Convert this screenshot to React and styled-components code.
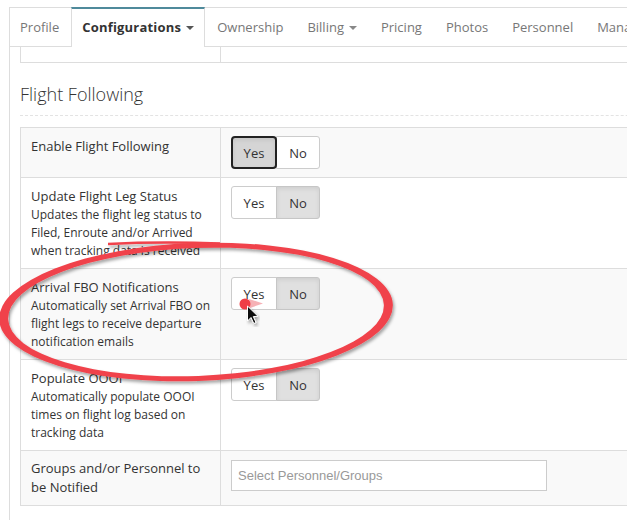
import React from "react";
import styled, { createGlobalStyle, css } from "styled-components";

const Global = createGlobalStyle`
  html, body { margin: 0; padding: 0; background: #fff; overflow: hidden; }
  body { font-family: "Open Sans", "Liberation Sans", sans-serif; color: #333; }
  * { box-sizing: border-box; }
`;

const Page = styled.div`
  position: relative;
  width: 900px;
  height: 520px;
  padding: 7px 0 0 9px;
`;

const Panel = styled.div`
  border: 1px solid #ddd;
  border-bottom: none;
  height: 600px;
`;

const TabBar = styled.div`
  display: flex;
  height: 39px;
  border-bottom: 1px solid #ddd;
`;

const Tab = styled.div`
  display: flex;
  align-items: center;
  padding: 0 11px;
  border: 1px solid transparent;
  border-top: none;
  border-bottom: none;
  height: 38px;
  font-size: 13px;
  color: #777;
  white-space: nowrap;
  &:first-child {
    padding-left: 9px;
  }
  ${(p) =>
    p.$active &&
    css`
      margin-top: -1px;
      height: 40px;
      padding: 0 10px 2px 10px;
      border-top: 2px solid #4f8a9b;
      border-left-color: #ddd;
      border-right-color: #ddd;
      background: #fff;
      color: #333;
      font-weight: 700;
      letter-spacing: 0.2px;
    `}
`;

const Caret = styled.span`
  display: inline-block;
  margin-left: 5px;
  margin-top: 1px;
  width: 0;
  height: 0;
  border-left: 4px solid transparent;
  border-right: 4px solid transparent;
  border-top: 4px solid ${(p) => (p.$dark ? "#555" : "#888")};
`;

const Content = styled.div`
  padding: 0 10px;
`;

const PrevTable = styled.div`
  display: grid;
  grid-template-columns: 200px 1fr;
  height: 16px;
  border-left: 1px solid #ddd;
  border-bottom: 1px solid #ddd;
`;

const PrevCell = styled.div`
  border-right: 1px solid #ddd;
`;

const Heading = styled.h3`
  margin: 21px 0 0;
  padding-bottom: 11px;
  font-size: 18px;
  font-weight: 300;
  line-height: 20px;
  color: #333;
  border-bottom: 1px dashed #e3e3e3;
`;

const Table = styled.div`
  margin-top: 11px;
  border: 1px solid #ddd;
  border-top: none;
`;

const Row = styled.div`
  display: grid;
  grid-template-columns: 200px 1fr;
  border-top: 1px solid #ddd;
  background: ${(p) => (p.$striped ? "#f9f9f9" : "#fff")};
`;

const LabelCell = styled.div`
  padding: 8px 10px;
  border-right: 1px solid #ddd;
`;

const ControlCell = styled.div`
  padding: 8px 10px;
`;

const Title = styled.div`
  font-size: 13px;
  line-height: ${(p) => (p.$tight ? "19px" : "20px")};
  color: #333;
`;

const Desc = styled.div`
  font-size: 12px;
  line-height: 18px;
  color: #333;
  white-space: nowrap;
`;

const BtnGroup = styled.div`
  display: inline-flex;
  height: 33px;
`;

const ToggleBtn = styled.div`
  display: flex;
  align-items: center;
  justify-content: center;
  width: ${(p) => p.$w}px;
  height: 33px;
  font-size: 13px;
  color: #333;
  background: #fff;
  border: 1px solid #ccc;
  &:first-child {
    border-radius: 3px 0 0 3px;
  }
  &:last-child {
    border-radius: 0 3px 3px 0;
    margin-left: -1px;
  }
  ${(p) =>
    p.$on &&
    css`
      background: #e0e0e0;
      border-color: #c6c6c6;
      box-shadow: inset 0 2px 4px rgba(0, 0, 0, 0.08);
    `}
  ${(p) =>
    p.$focus &&
    css`
      background: #d5d5d5;
      border: 2px solid #222;
      border-radius: 4px !important;
      position: relative;
      z-index: 1;
    `}
`;

const SelectInput = styled.input`
  display: block;
  width: 316px;
  height: 31px;
  margin-top: 1px;
  padding: 0 6px;
  border: 1px solid #ccc;
  background: #fff;
  font-family: "Liberation Sans", Arial, sans-serif;
  font-size: 13px;
  color: #555;
  outline: none;
  &::placeholder {
    color: #999;
  }
`;

const Overlay = styled.svg`
  position: absolute;
  left: 0;
  top: 0;
  width: 627px;
  height: 520px;
  pointer-events: none;
  overflow: visible;
`;

const Toggle = ({ value, focus }) => (
  <BtnGroup>
    <ToggleBtn $w={46} $on={value === "yes"} $focus={focus}>Yes</ToggleBtn>
    <ToggleBtn $w={44} $on={value === "no"}>No</ToggleBtn>
  </BtnGroup>
);

const tabs = [
  { label: "Profile" },
  { label: "Configurations", caret: true, active: true },
  { label: "Ownership" },
  { label: "Billing", caret: true },
  { label: "Pricing" },
  { label: "Photos" },
  { label: "Personnel" },
  { label: "Management" },
];

export default function App() {
  return (
    <>
      <Global />
      <Page>
        <Panel>
          <TabBar>
            {tabs.map((t) => (
              <Tab key={t.label} $active={t.active}>
                {t.label}
                {t.caret && <Caret $dark={t.active} />}
              </Tab>
            ))}
          </TabBar>
          <Content>
            <PrevTable>
              <PrevCell />
              <div />
            </PrevTable>
            <Heading>Flight Following</Heading>
            <Table>
              <Row $striped>
                <LabelCell>
                  <Title>Enable Flight Following</Title>
                </LabelCell>
                <ControlCell>
                  <Toggle value="yes" focus />
                </ControlCell>
              </Row>
              <Row>
                <LabelCell>
                  <Title>Update Flight Leg Status</Title>
                  <Desc>Updates the flight leg status to</Desc>
                  <Desc>Filed, Enroute and/or Arrived</Desc>
                  <Desc>when tracking data is received</Desc>
                </LabelCell>
                <ControlCell>
                  <Toggle value="no" />
                </ControlCell>
              </Row>
              <Row $striped>
                <LabelCell>
                  <Title>Arrival FBO Notifications</Title>
                  <Desc>Automatically set Arrival FBO on</Desc>
                  <Desc>flight legs to receive departure</Desc>
                  <Desc>notification emails</Desc>
                </LabelCell>
                <ControlCell>
                  <Toggle value="no" />
                </ControlCell>
              </Row>
              <Row>
                <LabelCell>
                  <Title>Populate OOOI</Title>
                  <Desc>Automatically populate OOOI</Desc>
                  <Desc>times on flight log based on</Desc>
                  <Desc>tracking data</Desc>
                </LabelCell>
                <ControlCell>
                  <Toggle value="no" />
                </ControlCell>
              </Row>
              <Row $striped>
                <LabelCell>
                  <Title $tight>
                    Groups and/or Personnel to
                    <br />
                    be Notified
                  </Title>
                </LabelCell>
                <ControlCell>
                  <SelectInput placeholder="Select Personnel/Groups" />
                </ControlCell>
              </Row>
            </Table>
          </Content>
        </Panel>
        <Overlay viewBox="0 0 627 520">
          <defs>
            <filter id="sh" x="-10%" y="-20%" width="120%" height="140%">
              <feDropShadow dx="1.5" dy="2.5" stdDeviation="1.6" floodColor="#000" floodOpacity="0.35" />
            </filter>
          </defs>
          <g filter="url(#sh)">
            <g transform="rotate(-2.2 196 312)">
              <path
                fillRule="evenodd"
                fill="#f0434b"
                d="M -1 312 a 197 69 0 1 0 394 0 a 197 69 0 1 0 -394 0 Z M 8 312 a 188 64 0 1 0 376 0 a 188 64 0 1 0 -376 0 Z"
              />
            </g>
            <path d="M 108 244 Q 160 241.5 220 243.5" stroke="#f0434b" strokeWidth="2.5" fill="none" />
          </g>
          <polygon points="249,299 263,303.5 250,308" fill="#f5a3a8" opacity="0.85" />
          <circle cx="245" cy="304" r="5.5" fill="#ef3d46" />
          <g filter="url(#sh)">
            <path
              d="M 247.5 306 L 247.5 321 L 251 317.5 L 253.8 323.5 L 256 322.5 L 253.3 316.6 L 258 316.3 Z"
              fill="#111"
              stroke="#fff"
              strokeWidth="1"
              strokeLinejoin="round"
            />
          </g>
        </Overlay>
      </Page>
    </>
  );
}
